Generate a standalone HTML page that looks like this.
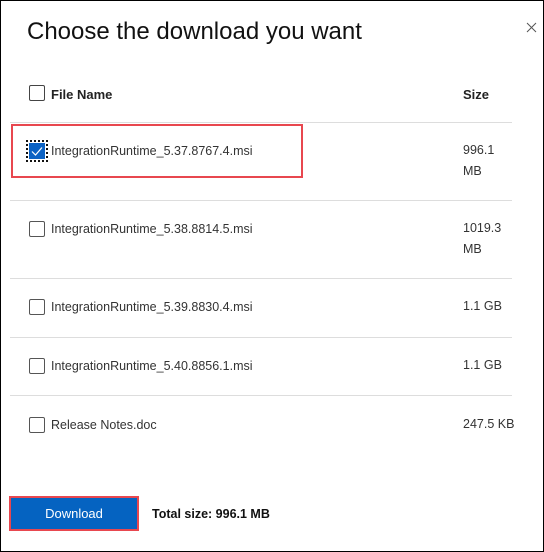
<!DOCTYPE html>
<html><head><style>
*{margin:0;padding:0;box-sizing:border-box}
html,body{width:544px;height:552px;background:#fff;overflow:hidden}
body{position:relative;font-family:"Liberation Sans",sans-serif;color:#222;border:1px solid #000}
.a{position:absolute}
.t{font-size:24px;left:26px;top:17px;color:#111;white-space:nowrap}
.hl{height:1px;background:#ddd;left:9px;width:502px}
.cb{width:16px;height:16px;border:1.5px solid #555;border-radius:2px;left:28px}
.txt{font-size:12.5px;color:#333;left:50px;white-space:nowrap}
.sz{font-size:12.5px;color:#333;left:462px;line-height:21px;white-space:nowrap}
</style></head><body>
<div class="a t">Choose the download you want</div>
<svg class="a" style="left:525px;top:21px" width="11" height="11" viewBox="0 0 11 11"><path d="M1 1L10 10M10 1L1 10" stroke="#555" stroke-width="1"/></svg>
<div class="a cb" style="top:84px;border-color:#444"></div>
<div class="a" style="left:50px;top:86px;font-size:13px;font-weight:bold;color:#222">File Name</div>
<div class="a" style="left:462px;top:86px;font-size:13px;font-weight:bold;color:#222">Size</div>
<div class="a hl" style="top:121px"></div>
<div class="a" style="left:10px;top:123px;width:292px;height:54px;border:2px solid #e8474f"></div>
<div class="a" style="left:25px;top:139px;width:22px;height:22px;border:2px dotted #111"></div>
<div class="a" style="left:28px;top:142px;width:16px;height:16px;background:#0b62c4"></div>
<svg class="a" style="left:29px;top:143px" width="14" height="14" viewBox="0 0 14 14"><path d="M2 7.5L5.5 11L12 3.5" stroke="#fff" stroke-width="1.2" fill="none"/></svg>
<div class="a txt" style="top:143px">IntegrationRuntime_5.37.8767.4.msi</div>
<div class="a sz" style="top:139px">996.1<br>MB</div>
<div class="a hl" style="top:199px"></div>
<div class="a cb" style="top:220px"></div>
<div class="a txt" style="top:221px">IntegrationRuntime_5.38.8814.5.msi</div>
<div class="a sz" style="top:217px">1019.3<br>MB</div>
<div class="a hl" style="top:277px"></div>
<div class="a cb" style="top:298px"></div>
<div class="a txt" style="top:299px">IntegrationRuntime_5.39.8830.4.msi</div>
<div class="a sz" style="top:295px">1.1 GB</div>
<div class="a hl" style="top:336px"></div>
<div class="a cb" style="top:357px"></div>
<div class="a txt" style="top:358px">IntegrationRuntime_5.40.8856.1.msi</div>
<div class="a sz" style="top:354px">1.1 GB</div>
<div class="a hl" style="top:394px"></div>
<div class="a cb" style="top:416px"></div>
<div class="a txt" style="top:417px">Release Notes.doc</div>
<div class="a sz" style="top:413px">247.5 KB</div>
<div class="a" style="left:8px;top:495px;width:130px;height:35px;border:2px solid #e8474f;background:#0563c1;color:#fff;font-size:13px;text-align:center;line-height:31px">Download</div>
<div class="a" style="left:151px;top:506px;font-size:12.5px;font-weight:bold;color:#111">Total size: 996.1 MB</div>
</body></html>
